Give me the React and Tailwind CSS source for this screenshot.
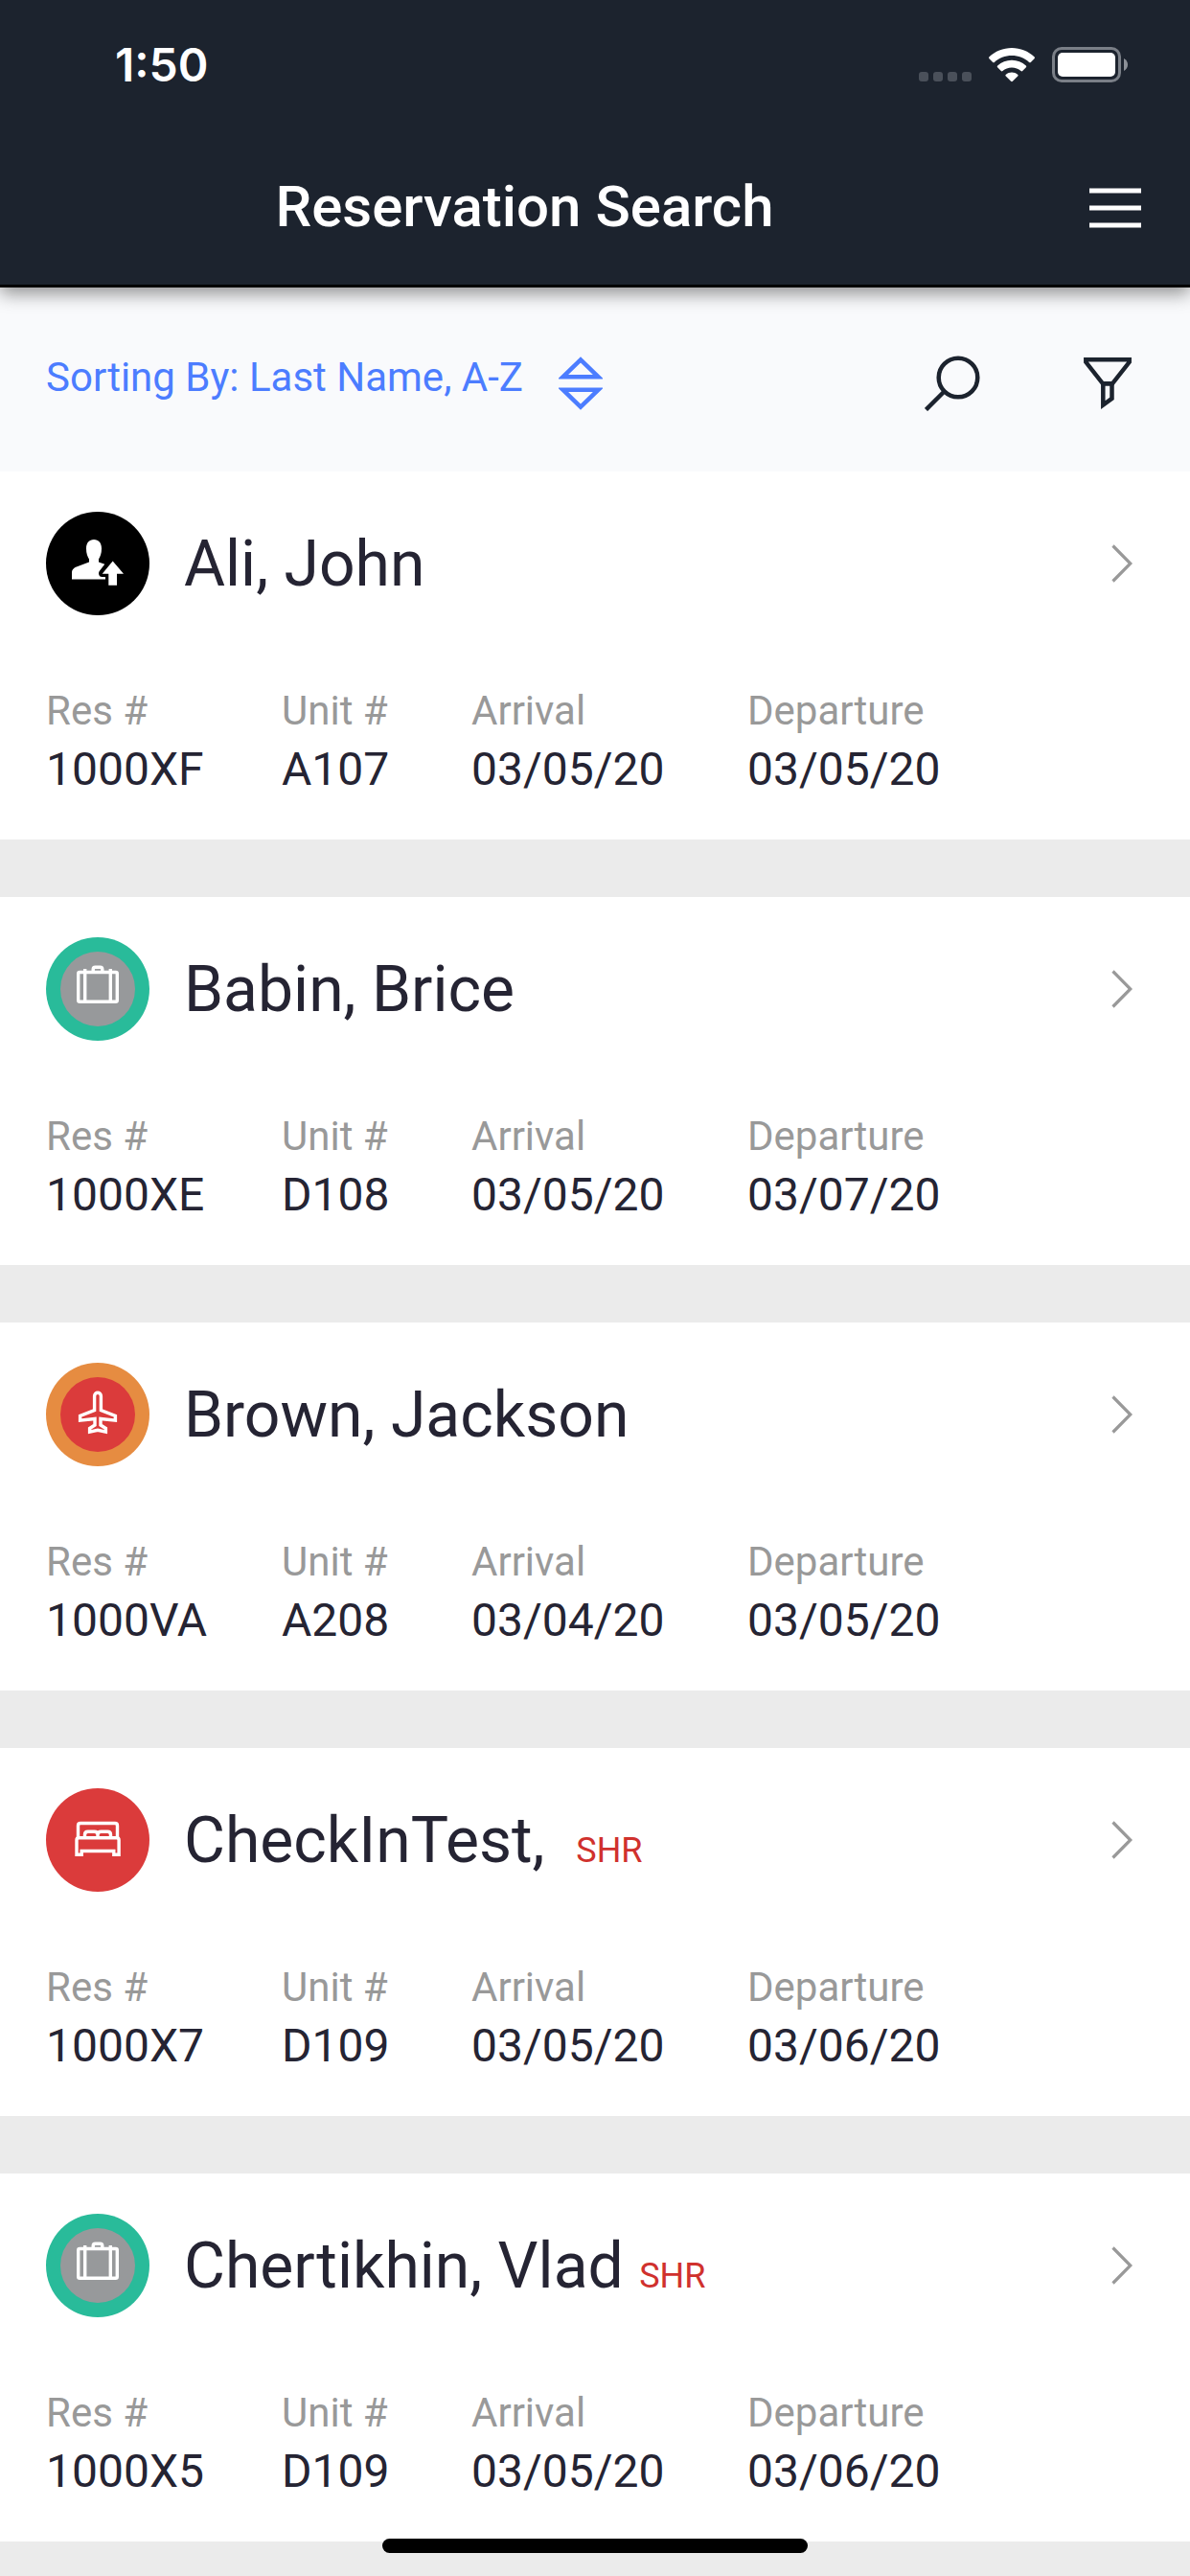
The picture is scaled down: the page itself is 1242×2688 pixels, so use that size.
const reservations = [
  { name: 'Ali, John', status: 'preArrival', res: '1000XF', unit: 'A107', arrival: '03/05/20', departure: '03/05/20' },
  { name: 'Babin, Brice', status: 'checkedOut', res: '1000XE', unit: 'D108', arrival: '03/05/20', departure: '03/07/20' },
  { name: 'Brown, Jackson', status: 'departing', res: '1000VA', unit: 'A208', arrival: '03/04/20', departure: '03/05/20' },
  { name: 'CheckInTest, ', tag: 'SHR', status: 'inHouse', res: '1000X7', unit: 'D109', arrival: '03/05/20', departure: '03/06/20' },
  { name: 'Chertikhin, Vlad', tag: 'SHR', status: 'checkedOut', res: '1000X5', unit: 'D109', arrival: '03/05/20', departure: '03/06/20' },
];

function PersonIcon() {
  return (
    <svg viewBox="0 0 108 108" className="size-[108px] shrink-0" fill="#fff" role="img" aria-label="Pre-arrival">
      <circle cx="54" cy="54" r="54" fill="#000" />
      <path d="M50 29c5 0 8 3.500 8 9.500 0 5-1.300 8-3 11v3l6.300 2.300-5.600 7.200c-1.500 2.300-.3 6 2.600 6H62v2.400H27V63c0-2 1.500-4 3.500-5L45 52.500v-3c-1.700-3-3-6-3-11 0-6 3-9.500 8-9.500z" />
      <path d="M69.700 51.500 81 64.700h-7v12h-8.700v-12h-6.600z" />
    </svg>
  );
}

function SuitcaseIcon() {
  return (
    <svg viewBox="0 0 108 108" className="size-[108px] shrink-0" fill="none" stroke="#fff" strokeWidth="3.400" role="img" aria-label="Checked out">
      <circle cx="54" cy="54" r="54" fill="#29bb9a" stroke="none" />
      <circle cx="54" cy="54" r="39" fill="#97999b" stroke="none" />
      <rect x="33.700" y="36.500" width="40.600" height="30.700" rx="1.500" />
      <path d="M40.700 33v34M67.300 33v34M49.200 36.500V33.500q0-2.200 2.200-2.200h5.200q2.200 0 2.200 2.200v3" />
    </svg>
  );
}

function PlaneIcon() {
  return (
    <svg viewBox="0 0 108 108" className="size-[108px] shrink-0" fill="none" stroke="#fff" strokeWidth="3.400" role="img" aria-label="Departing">
      <circle cx="54" cy="54" r="54" fill="#e68c41" stroke="none" />
      <circle cx="54" cy="54" r="39" fill="#db3b3b" stroke="none" />
      <path d="M50.600 34.700a3.400 3.400 0 0 1 6.800 0v15l15 5.800v4.700L57 58.500v6.500l5.400 3.500v3.600L54 70.300l-8.400 1.800v-3.600L51 65v-6.500l-15.400 1.700v-4.700l15-5.800z" />
    </svg>
  );
}

function BedIcon() {
  return (
    <svg viewBox="0 0 108 108" className="size-[108px] shrink-0" fill="none" stroke="#fff" strokeWidth="3.400" role="img" aria-label="In house">
      <circle cx="54" cy="54" r="54" fill="#db3b3b" stroke="none" />
      <path d="M33.500 52V39q0-2.500 2.500-2.500h36q2.500 0 2.500 2.500v13" />
      <path d="M40.500 51.500v-3q0-3.200 3.200-3.200h6.800q3.500 0 3.500 3.200v3v-3q0-3.200 3.500-3.200h6.800q3.200 0 3.200 3.200v3" />
      <path d="M32 69.200V54q0-2.200 2.200-2.200h39.700q2.200 0 2.200 2.200v15.200h-5.300v-3.700H37.200v3.700z" />
    </svg>
  );
}

const statusIcons = {
  preArrival: PersonIcon,
  checkedOut: SuitcaseIcon,
  departing: PlaneIcon,
  inHouse: BedIcon,
};

function StatusBar() {
  return (
    <div className="flex h-[132px] items-center justify-between pr-16 pl-[120px]">
      <span className="pt-1 font-[Inter,sans-serif] text-[48px] leading-[56px] font-semibold">1:50</span>
      <div className="flex items-center gap-[18px] pt-1">
        <div className="mt-6 flex gap-[5px]">
          {[0, 1, 2, 3].map((dot) => (
            <span key={dot} className="size-[10px] rounded-[3px] bg-[#4a505a]" />
          ))}
        </div>
        <svg viewBox="0 0 48 36" className="h-9 w-12" fill="#fff" aria-hidden="true">
          <path d="M24 0c9 0 17.500 3.500 23.500 9.300.6.600.6 1.300 0 1.900l-3.700 3.700c-.5.500-1.200.5-1.700 0C37.300 10.400 31 8 24 8S10.700 10.400 5.900 14.900c-.5.500-1.200.5-1.700 0L.5 11.200c-.6-.6-.6-1.300 0-1.900C6.500 3.500 15 0 24 0z" />
          <path d="M24 12.800c5.600 0 10.800 2.100 14.800 5.700.6.600.6 1.200.1 1.800l-3.700 3.700c-.5.500-1.100.5-1.700 0-2.500-2.200-5.900-3.500-9.500-3.500s-7 1.300-9.500 3.500c-.6.500-1.200.5-1.700 0l-3.700-3.700c-.5-.6-.5-1.200.1-1.800 4-3.600 9.200-5.700 14.800-5.700z" />
          <path d="M24 25.500c2.300 0 4.400.8 6.100 2.200.7.500.7 1.200.1 1.800l-5.300 5.300c-.6.600-1.200.6-1.800 0l-5.300-5.300c-.6-.6-.6-1.300.1-1.800 1.700-1.400 3.800-2.200 6.100-2.200z" />
        </svg>
        <svg viewBox="0 0 80 38" className="h-[38px] w-20" aria-hidden="true">
          <rect x="1.500" y="1.500" width="69" height="34" rx="8.500" fill="none" stroke="#7a7f87" strokeWidth="3" />
          <rect x="6" y="6" width="60" height="25" rx="5" fill="#fff" />
          <path d="M75 12v13c2.600-1.300 4-3.700 4-6.500s-1.400-5.200-4-6.500z" fill="#8d9198" />
        </svg>
      </div>
    </div>
  );
}

function Field({ label, value }) {
  return (
    <div>
      <dt className="text-[42px] leading-[56px] text-[#999]">{label}</dt>
      <dd className="text-[48px] leading-[66px]">{value}</dd>
    </div>
  );
}

function ReservationCard({ item }) {
  const Icon = statusIcons[item.status];
  return (
    <li className="bg-white px-12 pt-[42px] pb-10">
      <a href="#reservation" className="flex items-center">
        <Icon />
        <h2 className="ml-9 flex-1 pt-0.5 text-[66px] leading-[80px] whitespace-pre">
          {item.name}
          {item.tag && <span className="text-[#d0312d]"> <span className="text-[36px] leading-none">{item.tag}</span></span>}
        </h2>
        <svg viewBox="0 0 22 40" className="mr-3 h-10 w-[22px]" fill="none" stroke="#999" strokeWidth="3.200" aria-hidden="true">
          <path d="m1.500 1.500 18.300 18.500L1.500 38.500" />
        </svg>
      </a>
      <dl className="mt-[72px] grid grid-cols-[246px_198px_288px_1fr]">
        <Field label="Res #" value={item.res} />
        <Field label="Unit #" value={item.unit} />
        <Field label="Arrival" value={item.arrival} />
        <Field label="Departure" value={item.departure} />
      </dl>
    </li>
  );
}

export default function App() {
  return (
    <div className="min-h-screen bg-[#ebebeb] font-[Roboto,sans-serif] text-[#252433]">
      <header className="relative z-10 border-b-[3px] border-black bg-[#1c232e] text-white shadow-[0_6px_18px_rgba(0,0,0,0.44)]">
        <StatusBar />
        <div className="flex h-[165px] items-center">
          <h1 className="flex-1 pt-0.5 text-center text-[60px] leading-[72px] font-medium">Reservation Search</h1>
          <button type="button" aria-label="Menu" className="pt-1 pr-[51px] pl-[42px]">
            <svg viewBox="0 0 54 42" className="h-[42px] w-[54px]" stroke="#fff" strokeWidth="5" aria-hidden="true">
              <path d="M0 3h54M0 21h54M0 39h54" />
            </svg>
          </button>
        </div>
      </header>

      <section className="flex h-48 items-center justify-between bg-[#f9fafc] pr-[61px] pl-12" aria-label="Sorting and filters">
        <button type="button" className="flex items-center gap-[37px] text-[42px] leading-[56px] text-[#4c7dff]">
          <span className="pb-1">Sorting By: Last Name, A-Z</span>
          <svg viewBox="0 0 46 58" className="mt-2 h-[58px] w-[46px]" fill="none" stroke="#4c7dff" strokeWidth="4.500" aria-hidden="true">
            <path d="M4.700 22.200 23 4.500l18.300 17.700zM4.700 35.800 23 53.500l18.300-17.700z" />
          </svg>
        </button>
        <div className="flex items-center gap-[108px] pt-2 text-[#1c232e]">
          <button type="button" aria-label="Search">
            <svg viewBox="0 0 58 58" className="size-[58px]" fill="none" stroke="currentColor" strokeWidth="4.500" aria-hidden="true">
              <circle cx="35" cy="23" r="20.300" />
              <path d="M20.500 37.500 1.500 56.500" />
            </svg>
          </button>
          <button type="button" aria-label="Filter">
            <svg viewBox="0 0 50 54" className="h-[54px] w-[50px]" fill="none" stroke="currentColor" strokeWidth="4.500" aria-hidden="true">
              <path d="M2.300 2.300h45.400v2.500L30 27.300H20L2.300 4.800z" />
              <path d="M20.300 27.300h9.200v15.500l-9.200 6.700z" />
            </svg>
          </button>
        </div>
      </section>

      <main>
        <ul className="flex flex-col gap-[60px]">
          {reservations.map((item) => (
            <ReservationCard key={item.res} item={item} />
          ))}
        </ul>
      </main>

      <div className="fixed inset-x-0 bottom-6 z-20 mx-auto h-[15px] w-[444px] rounded-full bg-black" />
    </div>
  );
}
